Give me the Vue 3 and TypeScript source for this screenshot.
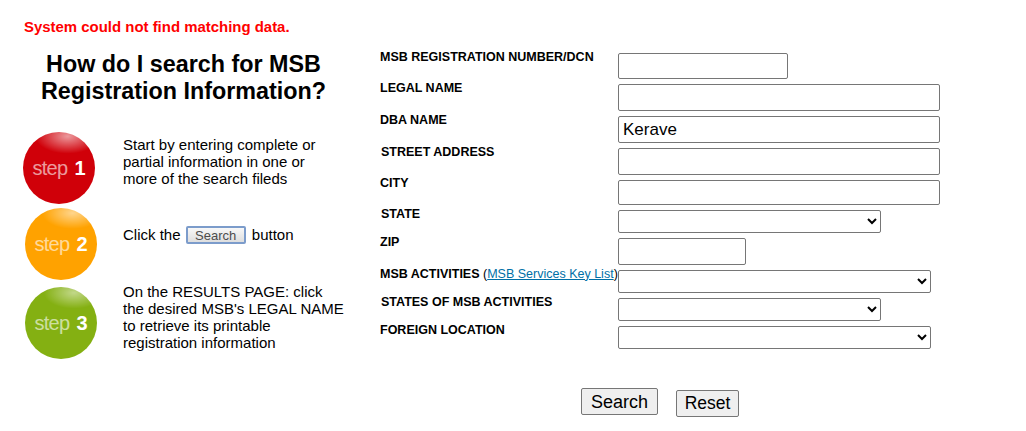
<script setup lang="ts">
interface Field {
  label: string
  kind: 'input' | 'select'
  size: string
  value?: string
  nudge?: boolean
  link?: boolean
  rowClass?: string
}

const fields: Field[] = [
  { label: 'MSB REGISTRATION NUMBER/DCN', kind: 'input', size: 'w170' },
  { label: 'LEGAL NAME', kind: 'input', size: 'w322' },
  { label: 'DBA NAME', kind: 'input', size: 'w322', value: 'Kerave' },
  { label: 'STREET ADDRESS', kind: 'input', size: 'w322', nudge: true },
  { label: 'CITY', kind: 'input', size: 'w322', rowClass: 'short' },
  { label: 'STATE', kind: 'select', size: 'w263', nudge: true },
  { label: 'ZIP', kind: 'input', size: 'w128', rowClass: 'tall' },
  { label: 'MSB ACTIVITIES', kind: 'select', size: 'w313', link: true },
  { label: 'STATES OF MSB ACTIVITIES', kind: 'select', size: 'w263', nudge: true },
  { label: 'FOREIGN LOCATION', kind: 'select', size: 'w313' },
]
</script>

<template>
  <main class="page">
    <section class="help">
      <p class="error">System could not find matching data.</p>
      <h1 class="title">How do I search for MSB<br />Registration Information?</h1>
      <div class="step step-one">
        <div class="ball red"><span>step</span> <b>1</b></div>
        <p class="step-text">Start by entering complete or<br />partial information in one or<br />more of the search fileds</p>
      </div>
      <div class="step step-two">
        <div class="ball orange"><span>step</span> <b>2</b></div>
        <p class="step-text">Click the <span class="mini">Search</span> button</p>
      </div>
      <div class="step step-three">
        <div class="ball green"><span>step</span> <b>3</b></div>
        <p class="step-text">On the RESULTS PAGE: click<br />the desired MSB's LEGAL NAME<br />to retrieve its printable<br />registration information</p>
      </div>
    </section>
    <form class="form" @submit.prevent>
      <div v-for="f in fields" :key="f.label" class="row" :class="[f.kind, f.rowClass]">
        <label class="label" :class="{ nudge: f.nudge }">{{ f.label }}<span v-if="f.link" class="paren"> (<a href="#" class="key">MSB Services Key List</a>)</span></label>
        <input v-if="f.kind === 'input'" class="control" :class="f.size" type="text" :value="f.value ?? ''" />
        <select v-else class="control" :class="f.size"><option></option></select>
      </div>
      <div class="actions">
        <button type="submit" class="btn search">Search</button>
        <button type="reset" class="btn reset">Reset</button>
      </div>
    </form>
  </main>
</template>

<style>
html, body { margin: 0; background: #fff; overflow: hidden; }
</style>

<style scoped>
.page {
  display: flex;
  width: 1026px;
  height: 431px;
  font-family: "Liberation Sans", Arial, sans-serif;
  color: #000;
  background: #fff;
}
.help { width: 380px; flex: none; }
.error {
  margin: 0;
  padding: 19px 0 0 24px;
  font-size: 14.95px;
  line-height: 16px;
  font-weight: 700;
  color: #f00;
}
.title {
  width: 367px;
  margin: 16px 0 0;
  font-size: 23.33px;
  line-height: 27px;
  font-weight: 700;
  text-align: center;
}
.step { display: flex; align-items: flex-start; }
.step-one { margin-top: 27px; padding-left: 23px; }
.step-two { height: 72px; margin-top: 4px; padding-left: 25px; }
.step-three { margin-top: 7px; padding-left: 25px; }
.ball {
  flex: none;
  width: 72px;
  height: 72px;
  border-radius: 50%;
  display: flex;
  align-items: center;
  justify-content: center;
  gap: 7px;
  font-size: 20px;
  color: #fff;
}
.ball span { opacity: 0.6; letter-spacing: -0.7px; }
.ball b { font-weight: 700; }
.red {
  background:
    radial-gradient(ellipse 45% 24% at 62% 6%, rgba(255,255,255,.6), rgba(255,255,255,0) 100%),
    radial-gradient(circle at 50% 50%, #d00009 0 70%, #c40008 100%);
}
.orange {
  background:
    radial-gradient(ellipse 42% 22% at 66% 7%, rgba(255,255,255,.55), rgba(255,255,255,0) 100%),
    radial-gradient(circle at 50% 50%, #ffa200 0 75%, #f79300 100%);
}
.green {
  background:
    radial-gradient(ellipse 42% 22% at 68% 8%, rgba(255,255,255,.5), rgba(255,255,255,0) 100%),
    radial-gradient(circle at 50% 50%, #84b012 0 75%, #76a60c 100%);
}
.step-text {
  margin: 0;
  font-size: 15px;
  line-height: 17px;
}
.step-one .step-text { margin: 4px 0 0 28px; }
.step-two .step-text { margin: 18px 0 0 26px; }
.step-three .step-text { margin: -4px 0 0 26px; }
.mini {
  display: inline-block;
  box-sizing: border-box;
  width: 60px;
  height: 18px;
  margin: 0 2px 0 1px;
  border: 2px solid #7c9ccb;
  border-radius: 2px;
  background: linear-gradient(#f8f8f8, #dedede);
  color: #4c4c4c;
  font-size: 13px;
  line-height: 15px;
  text-align: center;
  vertical-align: 0;
}
.form {
  flex: none;
  padding-top: 52.7px;
}
.row {
  display: flex;
  align-items: flex-start;
  height: 26.75px;
  margin-bottom: 5px;
}
.row.select { height: 23px; }
.row.short { height: 25px; }
.row.short .label { margin-top: -4px; }
.row.tall { height: 27px; }
.label {
  flex: none;
  width: 238px;
  margin-top: -3px;
  font-size: 12.5px;
  line-height: 14px;
  font-weight: 700;
  white-space: nowrap;
}
.label.nudge { margin-left: 1px; width: 237px; }
.paren { font-weight: 400; }
.key { color: #006fa6; text-decoration: underline; }
.control {
  box-sizing: border-box;
  height: 100%;
  flex: none;
  margin: 0;
  padding: 1px 4px;
  border: 1px solid #767676;
  border-radius: 2px;
  background: #fff;
  font-family: "Liberation Sans", Arial, sans-serif;
  font-size: 17px;
  color: #000;
}
.w170 { width: 170px; }
.w322 { width: 322px; }
.w263 { width: 263px; }
.w128 { width: 128px; }
.w313 { width: 313px; }
.actions {
  display: flex;
  align-items: flex-start;
  margin: 39px 0 0 201px;
  gap: 18px;
}
.btn {
  box-sizing: border-box;
  height: 27px;
  padding: 0 6px;
  border: 1px solid #767676;
  border-radius: 2px;
  background: #efefef;
  font-family: "Liberation Sans", Arial, sans-serif;
  font-size: 17.5px;
  color: #000;
}
.search { width: 77px; font-size: 18px; padding-top: 2px; }
.reset { width: 63px; margin-top: 2px; }
</style>
